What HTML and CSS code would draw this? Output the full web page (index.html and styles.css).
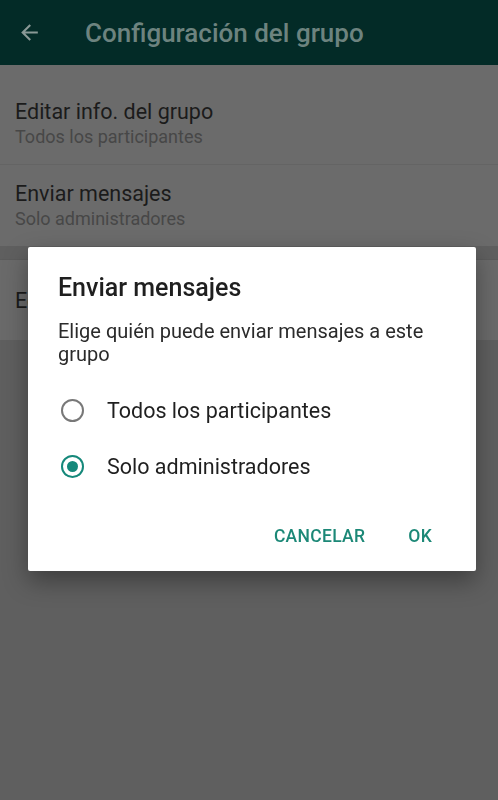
FILE: index.html
```html
<!DOCTYPE html>
<html lang="es">
<head>
    <meta charset="UTF-8">
    <meta name="viewport" content="width=device-width, initial-scale=1.0">
    <title>Configuración del grupo</title>
    <link rel="stylesheet" href="styles.css">
</head>
<body>
    <div class="screen">
        <header class="appbar">
            <svg class="back" width="24" height="24" viewBox="0 0 24 24">
                <path d="M20 11H7.83l5.59-5.59L12 4l-8 8 8 8 1.41-1.41L7.83 13H20v-2z" fill="currentColor"/>
            </svg>
            <h1>Configuración del grupo</h1>
        </header>

        <div class="list">
            <div class="row">
                <div class="row-title">Editar info. del grupo</div>
                <div class="row-sub">Todos los participantes</div>
            </div>
            <div class="row">
                <div class="row-title">Enviar mensajes</div>
                <div class="row-sub">Solo administradores</div>
            </div>
        </div>
        <div class="list list-second">
            <div class="row row-single">
                <div class="row-title">Editar administradores del grupo</div>
            </div>
        </div>
    </div>

    <div class="dialog">
        <h2>Enviar mensajes</h2>
        <p class="dialog-text">Elige quién puede enviar mensajes a este grupo</p>
        <div class="options">
            <label class="option">
                <span class="radio"></span>
                <span>Todos los participantes</span>
            </label>
            <label class="option">
                <span class="radio checked"></span>
                <span>Solo administradores</span>
            </label>
        </div>
        <div class="actions">
            <button>CANCELAR</button>
            <button>OK</button>
        </div>
    </div>
</body>
</html>
```

FILE: styles.css
```css
body {
    margin: 0;
    font-family: Roboto, "Noto Sans", Arial, sans-serif;
    background: #5f5f5f;
}
.screen {
    width: 498px;
    height: 800px;
    overflow: hidden;
}
.appbar {
    height: 65px;
    background: #032b27;
    display: flex;
    align-items: center;
    padding-left: 17px;
}
.back {
    color: #8a9996;
    width: 25px;
    height: 25px;
}
.appbar h1 {
    margin: 0 0 0 43px;
    font-size: 26px;
    font-weight: 500;
    color: #6d837f;
}
.list {
    background: #6b6b6b;
    padding-top: 18px;
    border-top: 0;
}
.list-second {
    margin-top: 14px;
    padding-top: 0;
    background: #6a6a6a;
}
.row {
    padding: 15px 15px;
    border-bottom: 1px solid #646464;
}
.row:last-child {
    border-bottom: 0;
}
.row-title {
    font-size: 21.5px;
    line-height: 27px;
    color: #1b1b1b;
}
.row-sub {
    font-size: 18px;
    line-height: 24px;
    color: #474747;
}
.row-single {
    height: 80px;
    box-sizing: border-box;
    display: flex;
    align-items: center;
    padding: 0 15px;
}
.list-second {
    box-shadow: 0 -1px 0 #5b5b5b;
}

/* dialog */
.dialog {
    position: fixed;
    top: 247px;
    left: 28px;
    width: 448px;
    box-sizing: border-box;
    background: #fff;
    padding: 27px 0 11px;
    border-radius: 2px;
    box-shadow: 0 10px 24px rgba(0, 0, 0, 0.35);
}
.dialog h2 {
    margin: 0 30px;
    font-size: 25px;
    line-height: 28px;
    font-weight: 500;
    color: #1f1f1f;
}
.dialog-text {
    margin: 18px 30px 0;
    font-size: 20px;
    line-height: 23px;
    color: #2b2b2b;
}
.options {
    margin-top: 16px;
}
.option {
    display: flex;
    align-items: center;
    height: 56px;
    padding-left: 33px;
    font-size: 21.5px;
    color: #1f1f1f;
}
.radio {
    width: 19px;
    height: 19px;
    border: 2.5px solid #787878;
    border-radius: 50%;
    margin-right: 23px;
    position: relative;
}
.radio.checked {
    border-color: #15887a;
}
.radio.checked::after {
    content: "";
    position: absolute;
    top: 4px;
    left: 4px;
    width: 11px;
    height: 11px;
    border-radius: 50%;
    background: #15887a;
}
.actions {
    display: flex;
    justify-content: flex-end;
    height: 48px;
    margin-top: 18px;
    padding-right: 36px;
}
.actions button {
    background: none;
    border: none;
    font-family: inherit;
    font-size: 17.5px;
    font-weight: 500;
    letter-spacing: 0.3px;
    color: #1c8877;
    padding: 0 8px;
    margin-left: 27px;
}
```
